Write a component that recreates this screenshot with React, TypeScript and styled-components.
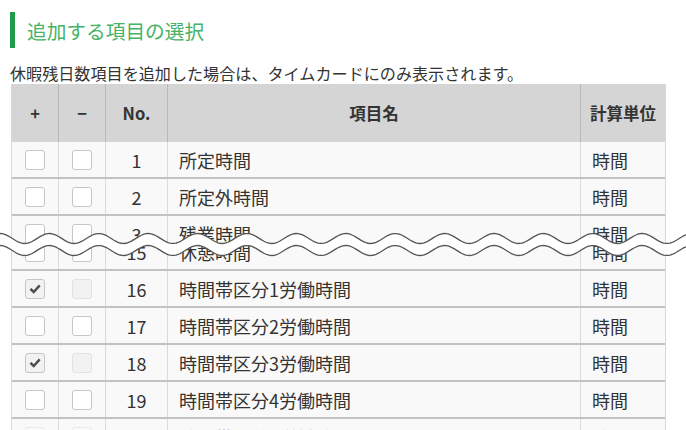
import React from 'react';
import styled, { createGlobalStyle } from 'styled-components';

type BoxState = 'off' | 'on' | 'disabled';

interface Item {
  no: number;
  name: string;
  unit: string;
  add: BoxState;
  remove: BoxState;
}

const GlobalStyle = createGlobalStyle`
  html, body {
    margin: 0;
    padding: 0;
    background: #fff;
  }
  body {
    font-family: 'Noto Sans CJK JP', 'Noto Sans', sans-serif;
    color: #333;
  }
`;

const COLUMNS = '47px 47px 62px 413px 84px';
const PAGE_WIDTH = 686;
const WAVE_PERIOD = 49.4;
const WAVE_AMP = 5;

const Page = styled.div`
  box-sizing: border-box;
  width: ${PAGE_WIDTH}px;
  height: 430px;
  overflow: hidden;
  padding: 12px 21px 0 10px;
`;

const Title = styled.h2`
  margin: 0;
  height: 36px;
  display: flex;
  align-items: center;
  border-left: 5px solid #1e9c48;
  padding-left: 12px;
  font-size: 19.7px;
  font-weight: normal;
  color: #46b265;
`;

const Lead = styled.p`
  margin: 15px 0 0;
  height: 21px;
  font-size: 16.1px;
  line-height: 21px;
  white-space: nowrap;
  color: #333;
`;

const Table = styled.div`
  box-sizing: border-box;
  width: 655px;
  margin-left: 1px;
  border-left: 1px solid #d8d8d8;
  border-right: 1px solid #d8d8d8;
`;

const HeadRow = styled.div`
  display: grid;
  grid-template-columns: ${COLUMNS};
  height: 58px;
  background: #d5d5d5;
  font-size: 16.5px;
  font-weight: bold;
  color: #333;
`;

const HeadCell = styled.div`
  display: flex;
  align-items: center;
  justify-content: center;
  border-right: 1px solid #b8b8b8;

  &:last-child {
    border-right: none;
  }
`;

const Row = styled.div<{ $faded?: boolean }>`
  box-sizing: border-box;
  flex-shrink: 0;
  display: grid;
  grid-template-columns: ${COLUMNS};
  height: 37px;
  background: #f9f9f9;
  border-bottom: 2px solid #c2c2c2;
  font-size: 18px;
  color: #333;

  & > * > * {
    opacity: ${(p) => (p.$faded ? 0.3 : 1)};
  }
`;

const Cell = styled.div<{ $align?: 'left' | 'center' }>`
  display: flex;
  align-items: center;
  justify-content: ${(p) => (p.$align === 'left' ? 'flex-start' : 'center')};
  padding-left: ${(p) => (p.$align === 'left' ? '11px' : '0')};
  border-right: 1px solid #dadada;
  white-space: nowrap;

  &:last-child {
    border-right: none;
  }
`;

const Box = styled.span<{ $state: BoxState }>`
  box-sizing: border-box;
  display: flex;
  align-items: center;
  justify-content: center;
  width: 20px;
  height: 20px;
  border-radius: 3px;
  border: 1px solid ${(p) => (p.$state === 'disabled' ? '#e2e2e2' : '#c6c6c6')};
  background: ${(p) => (p.$state === 'off' ? '#fff' : '#f2f2f2')};
`;

const BreakZone = styled.div`
  position: relative;
  display: flex;
  flex-direction: column;
  height: 55px;
`;

const BreakTop = styled.div`
  height: 27px;
  overflow: hidden;
`;

const BreakBottom = styled.div`
  height: 28px;
  overflow: hidden;
  display: flex;
  flex-direction: column;
  justify-content: flex-end;
`;

const Wave = styled.svg`
  position: absolute;
  left: -12px;
  top: 13px;
  width: ${PAGE_WIDTH}px;
  height: 30px;
  overflow: visible;
`;

const wavePoints = (center: number) => {
  const pts: string[] = [];
  for (let x = 0; x <= PAGE_WIDTH; x += 2) {
    const y = center - WAVE_AMP * Math.cos((2 * Math.PI * x) / WAVE_PERIOD);
    pts.push(`${x},${y.toFixed(2)}`);
  }
  return pts;
};

const upper = wavePoints(9.5);
const lower = wavePoints(21.5);

function Check() {
  return (
    <svg width="14" height="14" viewBox="0 0 16 16">
      <path d="M1.8 8.9 L3.9 6.9 L6.6 9.5 L12.3 2.9 L14.4 4.8 L6.6 13.4 Z" fill="#4d4d4d" />
    </svg>
  );
}

function CheckBox({ state }: { state: BoxState }) {
  return <Box $state={state}>{state === 'on' && <Check />}</Box>;
}

function ItemRow({ item, faded }: { item: Item; faded?: boolean }) {
  return (
    <Row $faded={faded}>
      <Cell><CheckBox state={item.add} /></Cell>
      <Cell><CheckBox state={item.remove} /></Cell>
      <Cell><span>{item.no}</span></Cell>
      <Cell $align="left"><span>{item.name}</span></Cell>
      <Cell $align="left"><span>{item.unit}</span></Cell>
    </Row>
  );
}

const item = (no: number, name: string, checked = false): Item => ({
  no,
  name,
  unit: '時間',
  add: checked ? 'on' : 'off',
  remove: checked ? 'disabled' : 'off',
});

const before = [item(1, '所定時間'), item(2, '所定外時間')];
const cutTop = item(3, '残業時間');
const cutBottom = item(15, '休憩時間');
const after = [
  item(16, '時間帯区分1労働時間', true),
  item(17, '時間帯区分2労働時間'),
  item(18, '時間帯区分3労働時間', true),
  item(19, '時間帯区分4労働時間'),
];
const last = item(20, '時間帯区分5労働時間');

export default function App() {
  return (
    <>
      <GlobalStyle />
      <Page>
        <Title>追加する項目の選択</Title>
        <Lead>休暇残日数項目を追加した場合は、タイムカードにのみ表示されます。</Lead>
        <Table>
          <HeadRow>
            <HeadCell>+</HeadCell>
            <HeadCell>−</HeadCell>
            <HeadCell>No.</HeadCell>
            <HeadCell>項目名</HeadCell>
            <HeadCell>計算単位</HeadCell>
          </HeadRow>
          {before.map((it) => <ItemRow key={it.no} item={it} />)}
          <BreakZone>
            <BreakTop><ItemRow item={cutTop} /></BreakTop>
            <BreakBottom><ItemRow item={cutBottom} /></BreakBottom>
            <Wave viewBox={`0 0 ${PAGE_WIDTH} 30`}>
              <polygon points={[...upper, ...lower.slice().reverse()].join(' ')} fill="#fff" />
              <polyline points={upper.join(' ')} fill="none" stroke="#555" strokeWidth="1.3" />
              <polyline points={lower.join(' ')} fill="none" stroke="#555" strokeWidth="1.3" />
            </Wave>
          </BreakZone>
          {after.map((it) => <ItemRow key={it.no} item={it} />)}
          <ItemRow item={last} faded />
        </Table>
      </Page>
    </>
  );
}
